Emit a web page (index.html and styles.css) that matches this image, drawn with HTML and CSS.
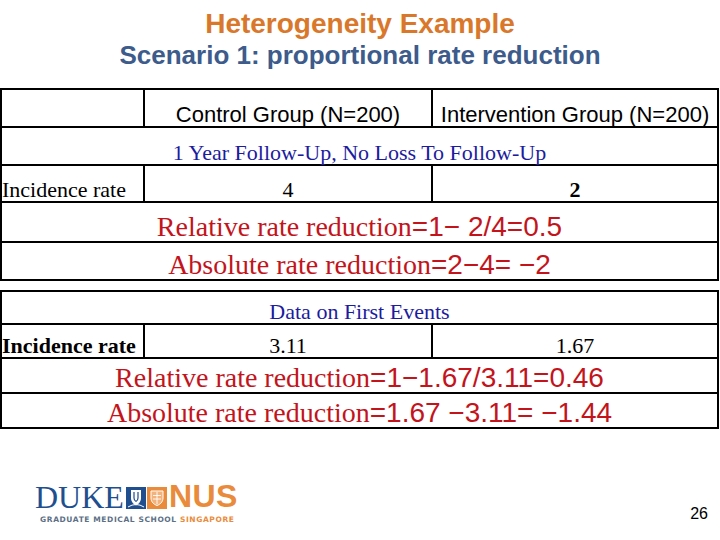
FILE: index.html
```html
<!DOCTYPE html>
<html>
<head>
<meta charset="utf-8">
<link rel="stylesheet" href="styles.css">
</head>
<body>
<header class="titles">
  <h1 class="title">Heterogeneity Example</h1>
  <h2 class="subtitle">Scenario 1: proportional rate reduction</h2>
</header>

<div class="grid grid-a">
  <div class="cell"></div>
  <div class="cell sans">Control Group (N=200)</div>
  <div class="cell sans">Intervention Group (N=200)</div>
  <div class="cell span blue">1 Year Follow-Up, No Loss To Follow-Up</div>
  <div class="cell left">Incidence rate</div>
  <div class="cell">4</div>
  <div class="cell bold">2</div>
  <div class="cell span red big">Relative rate reduction<span class="num">=1− 2/4=0.5</span></div>
  <div class="cell span red big">Absolute rate reduction<span class="num">=2−4= −2</span></div>
</div>

<div class="grid grid-b">
  <div class="cell span blue">Data on First Events</div>
  <div class="cell left bold">Incidence rate</div>
  <div class="cell">3.11</div>
  <div class="cell">1.67</div>
  <div class="cell span red big">Relative rate reduction<span class="num">=1−1.67/3.11=0.46</span></div>
  <div class="cell span red big">Absolute rate reduction<span class="num">=1.67 −3.11= −1.44</span></div>
</div>

<footer class="footer">
  <div class="logo">
    <div class="logo-top">
      <span class="duke">DUKE</span>
      <span class="crest crest-blue">
        <svg width="20" height="22" viewBox="0 0 20 22">
          <path d="M5 3 H15 V11 C15 15 12 17.5 10 18.5 C8 17.5 5 15 5 11 Z" fill="#fff"/>
          <path d="M8 5 V11 C8 13 9 14 10 14.5 M12 5 V11 C12 13 11 14 10 14.5" stroke="#1f4f8f" stroke-width="1.2" fill="none"/>
          <path d="M2 20 Q10 15 18 20" stroke="#fff" stroke-width="1" fill="none"/>
        </svg>
      </span>
      <span class="crest crest-orange">
        <svg width="20" height="22" viewBox="0 0 20 22">
          <path d="M4 4 H16 V11 C16 15 13 17.5 10 18.5 C7 17.5 4 15 4 11 Z" fill="#f2b27a" stroke="#fff" stroke-width="1"/>
          <path d="M6 8.5 H14 M6 12 H14 M10 5 V17" stroke="#fff" stroke-width="0.9"/>
        </svg>
      </span>
      <span class="nus">NUS</span>
    </div>
    <div class="logo-sub"><span>GRADUATE MEDICAL SCHOOL</span> <span class="sg">SINGAPORE</span></div>
  </div>
  <div class="page">26</div>
</footer>
</body>
</html>
```

FILE: styles.css
```css
* { box-sizing: border-box; }

html, body {
  margin: 0;
  padding: 0;
  width: 720px;
  height: 540px;
  overflow: hidden;
  background: #ffffff;
}

.titles {
  height: 88px;
  padding-top: 8px;
  text-align: center;
  font-family: "Liberation Sans", Arial, sans-serif;
  font-weight: bold;
}

.title {
  margin: 0;
  font-size: 28px;
  line-height: 32px;
  color: #d9782a;
}

.subtitle {
  margin: 0;
  font-size: 26px;
  line-height: 30px;
  color: #3d5b8b;
}

.grid {
  display: grid;
  width: 719px;
  grid-template-columns: 141px 286px 284px;
  gap: 2px;
  padding: 2px;
  background: #000;
}

.grid-a {
  grid-template-rows: 36px 36px 35px 38px 36px;
}

.grid-b {
  margin-top: 9px;
  grid-template-rows: 31px 32px 33px 33px;
}

.cell {
  background: #fff;
  display: flex;
  align-items: flex-end;
  justify-content: center;
  font-family: "Liberation Serif", "Times New Roman", serif;
  font-size: 22px;
  line-height: 22px;
  color: #000;
  white-space: nowrap;
}

.span { grid-column: 1 / -1; }

.left { justify-content: flex-start; }

.bold { font-weight: bold; }

.sans {
  font-family: "Liberation Sans", Arial, sans-serif;
  font-size: 22px;
}

.blue { color: #1c1ca0; }

.red { color: #c3141c; }

.big {
  font-size: 28px;
  line-height: 28px;
}

.num {
  font-family: "Liberation Sans", Arial, sans-serif;
}

.footer {
  height: 113px;
  display: flex;
  justify-content: space-between;
  align-items: flex-end;
  padding: 0 12px 18px 35px;
}

.logo {
  display: flex;
  flex-direction: column;
}

.logo-top {
  display: flex;
  align-items: flex-end;
}

.duke {
  font-family: "Liberation Serif", "Times New Roman", serif;
  font-size: 32px;
  line-height: 36px;
  color: #1f4f8f;
}

.crest {
  display: flex;
  width: 20px;
  height: 22px;
  margin-bottom: 6px;
  align-items: center;
  justify-content: center;
}

.crest-blue { background: #1f4f8f; margin-left: 2px; }
.crest-orange { background: #e98b3a; margin-left: 1px; }

.nus {
  margin-left: 2px;
  font-family: "Liberation Sans", Arial, sans-serif;
  font-weight: bold;
  font-size: 32px;
  line-height: 37px;
  letter-spacing: 0.5px;
  color: #e98b3a;
}

.logo-sub {
  padding-left: 5px;
  font-family: "DejaVu Sans", sans-serif;
  font-weight: bold;
  font-size: 7.5px;
  line-height: 9px;
  letter-spacing: 0.6px;
  color: #5c6f86;
  white-space: nowrap;
}

.sg { color: #e98b3a; }

.page {
  font-family: "Liberation Sans", Arial, sans-serif;
  font-size: 16px;
  line-height: 18px;
  margin-bottom: 1px;
  color: #000;
}
```
